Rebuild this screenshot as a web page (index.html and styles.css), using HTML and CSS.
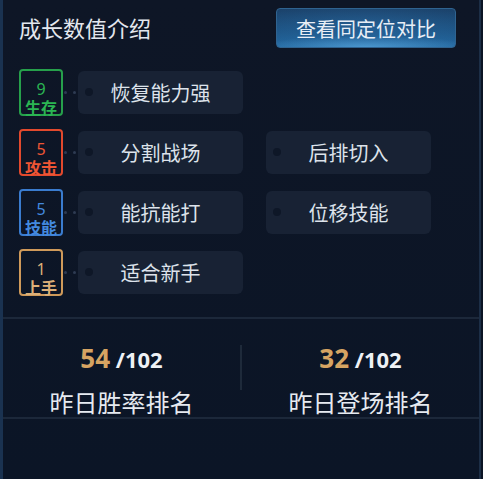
FILE: index.html
```html
<!DOCTYPE html>
<html lang="zh">
<head>
<meta charset="utf-8">
<link rel="stylesheet" href="styles.css">
</head>
<body>
<div class="panel">
  <div class="header">
    <div class="title">成长数值介绍</div>
    <div class="btn">查看同定位对比</div>
  </div>
  <div class="rows">
    <div class="row">
      <div class="badge green"><span class="num">9</span><span class="lab">生存</span></div>
      <div class="conn"><i></i><i></i></div>
      <div class="pill"><span class="dot"></span>恢复能力强</div>
    </div>
    <div class="row">
      <div class="badge red"><span class="num">5</span><span class="lab">攻击</span></div>
      <div class="conn"><i></i><i></i></div>
      <div class="pill"><span class="dot"></span>分割战场</div>
      <div class="pill second"><span class="dot"></span>后排切入</div>
    </div>
    <div class="row">
      <div class="badge blue"><span class="num">5</span><span class="lab">技能</span></div>
      <div class="conn"><i></i><i></i></div>
      <div class="pill"><span class="dot"></span>能抗能打</div>
      <div class="pill second"><span class="dot"></span>位移技能</div>
    </div>
    <div class="row">
      <div class="badge gold"><span class="num">1</span><span class="lab">上手</span></div>
      <div class="conn"><i></i><i></i></div>
      <div class="pill"><span class="dot"></span>适合新手</div>
    </div>
  </div>
  <div class="stats">
    <div class="stat">
      <div class="val"><span class="big">54</span> /102</div>
      <div class="name">昨日胜率排名</div>
    </div>
    <div class="vline"></div>
    <div class="stat">
      <div class="val"><span class="big">32</span> /102</div>
      <div class="name">昨日登场排名</div>
    </div>
  </div>
</div>
</body>
</html>
```

FILE: styles.css
```css
html, body {
  margin: 0;
  padding: 0;
  background: #0b1424;
}
body {
  width: 483px;
  height: 479px;
  overflow: hidden;
  font-family: "Noto Sans CJK SC", "Noto Sans", sans-serif;
}
.panel {
  width: 481px;
  height: 479px;
  box-sizing: border-box;
  border-left: 3px solid #1a3250;
  border-right: 2px solid #1c2e46;
  background: linear-gradient(#0e1626, #0b1526);
}
.header {
  height: 56px;
  display: flex;
  align-items: flex-start;
  justify-content: space-between;
  padding: 8px 23px 0 16px;
  box-sizing: border-box;
}
.title {
  font-size: 22px;
  line-height: 22px;
  margin-top: 8px;
  color: #e3e7ee;
}
.btn {
  width: 180px;
  height: 40px;
  box-sizing: border-box;
  border: 1px solid #2f6390;
  border-radius: 4px;
  background:
    radial-gradient(ellipse 60% 30% at 50% 100%, rgba(100,180,235,0.6), rgba(100,180,235,0) 100%),
    radial-gradient(ellipse 70% 80% at 50% 50%, rgba(50,120,180,0.35), rgba(50,120,180,0) 100%),
    linear-gradient(#1a4068, #1d5586 60%, #2368a0);
  color: #e8eef6;
  font-size: 20px;
  display: flex;
  align-items: center;
  justify-content: center;
}
.rows {
  display: flex;
  flex-direction: column;
  gap: 13px;
  padding: 13px 0 0 16px;
  height: 261px;
  box-sizing: border-box;
}
.row {
  display: flex;
  align-items: center;
  height: 47px;
}
.badge {
  width: 44px;
  height: 47px;
  box-sizing: border-box;
  border: 2px solid;
  border-radius: 4px;
  display: flex;
  flex-direction: column;
  align-items: center;
}
.badge .num {
  font-family: "Noto Sans", sans-serif;
  font-size: 16px;
  line-height: 16px;
  margin-top: 10px;
}
.badge .lab {
  font-size: 16px;
  line-height: 16px;
  margin-top: 2px;
  font-weight: 700;
}
.green { border-color: #26a04b; color: #2bb553; }
.red { border-color: #e2492d; color: #ee5534; }
.blue { border-color: #3a7ccf; color: #4389df; }
.gold { border-color: #cf9a5a; color: #ddb078; }
.conn {
  width: 15px;
  display: flex;
  align-items: center;
  justify-content: space-between;
  padding: 0 2px 0 1px;
  box-sizing: border-box;
}
.conn i {
  width: 3px;
  height: 3px;
  border-radius: 50%;
  background: #2e3b52;
  display: block;
}
.pill {
  width: 165px;
  height: 43px;
  box-sizing: border-box;
  background: #182234;
  border-radius: 6px;
  position: relative;
  display: flex;
  align-items: center;
  justify-content: center;
  color: #dde3eb;
  font-size: 20px;
}
.pill.second {
  margin-left: 23px;
}
.dot {
  position: absolute;
  left: 7px;
  top: 17px;
  width: 8px;
  height: 8px;
  border-radius: 50%;
  background: #0e1727;
}
.stats {
  border-top: 2px solid #1c283a;
  border-bottom: 2px solid #1c283a;
  height: 102px;
  box-sizing: border-box;
  display: flex;
  align-items: flex-start;
}
.stat {
  flex: 1;
  display: flex;
  flex-direction: column;
  align-items: center;
  padding-top: 24px;
}
.val {
  font-family: "Noto Sans", sans-serif;
  font-weight: 700;
  font-size: 22px;
  line-height: 30px;
  color: #eef1f5;
}
.val .big {
  font-size: 26px;
  color: #d6a462;
}
.name {
  font-size: 24px;
  line-height: 30px;
  margin-top: 13px;
  color: #e6eaf0;
}
.vline {
  width: 2px;
  height: 45px;
  background: #1e2a3a;
  margin-top: 26px;
}
```
